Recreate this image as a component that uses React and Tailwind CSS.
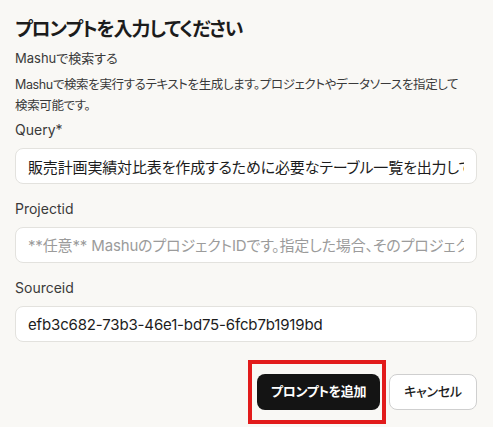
export default function App() {
  return (
    <div className="min-h-[427px] w-[493px] bg-[#f9f8f5] pl-[15px] pr-[16px] pt-4 font-['Inter','Noto_Sans_CJK_JP',sans-serif] text-[#1c1c1c] [font-feature-settings:'palt']">
      <h2 className="text-[19px] font-bold leading-7 tracking-[-0.06em]">
        プロンプトを入力してください
      </h2>
      <p className="mt-1 text-[13px] leading-5 text-[#3a3a3a]">Mashuで検索する</p>
      <p className="mt-[6px] text-[12.5px] leading-[21px] tracking-[-0.03em] text-[#3a3a3a]">
        Mashuで検索を実行するテキストを生成します。プロジェクトやデータソースを指定して
        <br />
        検索可能です。
      </p>

      <Field label="Query*" className="mt-[4px]" value="販売計画実績対比表を作成するために必要なテーブル一覧を出力して" />
      <Field
        label="Projectid"
        className="mt-[15px]"
        placeholder="**任意** MashuのプロジェクトIDです。指定した場合、そのプロジェクト内のデータのみを検索します。"
      />
      <Field label="Sourceid" className="mt-[15px]" value="efb3c682-73b3-46e1-bd75-6fcb7b1919bd" />

      <div className="mt-8 flex justify-end gap-[9px]">
        <div className="relative">
          <button className="h-9 w-[123px] rounded-lg bg-[#141414] text-[13px] font-bold tracking-[-0.03em] text-white">
            プロンプトを追加
          </button>
          <div className="pointer-events-none absolute -top-[14px] -bottom-[14px] -left-[9px] -right-[6px] border-4 border-[#e21b1b]"></div>
        </div>
        <button className="h-9 w-[88px] rounded-lg border border-[#cfcfcf] bg-white text-[13px] font-medium tracking-[-0.02em] text-[#1c1c1c]">
          キャンセル
        </button>
      </div>
    </div>
  );
}

function Field({ label, value, placeholder, className }) {
  return (
    <div className={className}>
      <p className="text-sm leading-5 text-[#3a3a3a]">{label}</p>
      <input
        type="text"
        readOnly
        defaultValue={value}
        placeholder={placeholder}
        className="mt-2 h-9 w-full rounded-lg border border-[#e3e2de] bg-white px-3 text-[15px] tracking-[-0.01em] text-[#1c1c1c] outline-none placeholder:text-[#9b9b9b] [font-feature-settings:'palt']"
      />
    </div>
  );
}
